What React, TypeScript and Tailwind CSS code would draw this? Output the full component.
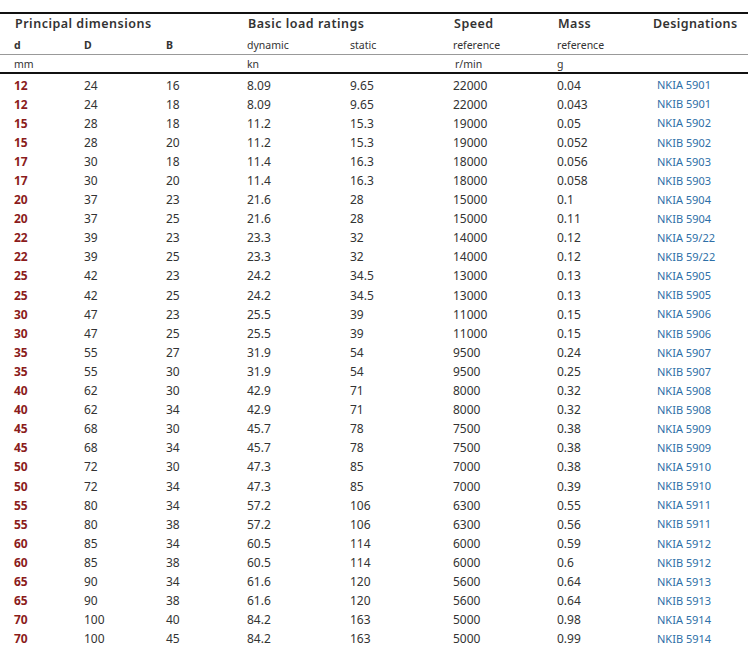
import React from "react";

const rows: string[][] = [
  ["12", "24", "16", "8.09", "9.65", "22000", "0.04", "NKIA 5901"],
  ["12", "24", "18", "8.09", "9.65", "22000", "0.043", "NKIB 5901"],
  ["15", "28", "18", "11.2", "15.3", "19000", "0.05", "NKIA 5902"],
  ["15", "28", "20", "11.2", "15.3", "19000", "0.052", "NKIB 5902"],
  ["17", "30", "18", "11.4", "16.3", "18000", "0.056", "NKIA 5903"],
  ["17", "30", "20", "11.4", "16.3", "18000", "0.058", "NKIB 5903"],
  ["20", "37", "23", "21.6", "28", "15000", "0.1", "NKIA 5904"],
  ["20", "37", "25", "21.6", "28", "15000", "0.11", "NKIB 5904"],
  ["22", "39", "23", "23.3", "32", "14000", "0.12", "NKIA 59/22"],
  ["22", "39", "25", "23.3", "32", "14000", "0.12", "NKIB 59/22"],
  ["25", "42", "23", "24.2", "34.5", "13000", "0.13", "NKIA 5905"],
  ["25", "42", "25", "24.2", "34.5", "13000", "0.13", "NKIB 5905"],
  ["30", "47", "23", "25.5", "39", "11000", "0.15", "NKIA 5906"],
  ["30", "47", "25", "25.5", "39", "11000", "0.15", "NKIB 5906"],
  ["35", "55", "27", "31.9", "54", "9500", "0.24", "NKIA 5907"],
  ["35", "55", "30", "31.9", "54", "9500", "0.25", "NKIB 5907"],
  ["40", "62", "30", "42.9", "71", "8000", "0.32", "NKIA 5908"],
  ["40", "62", "34", "42.9", "71", "8000", "0.32", "NKIB 5908"],
  ["45", "68", "30", "45.7", "78", "7500", "0.38", "NKIA 5909"],
  ["45", "68", "34", "45.7", "78", "7500", "0.38", "NKIB 5909"],
  ["50", "72", "30", "47.3", "85", "7000", "0.38", "NKIA 5910"],
  ["50", "72", "34", "47.3", "85", "7000", "0.39", "NKIB 5910"],
  ["55", "80", "34", "57.2", "106", "6300", "0.55", "NKIA 5911"],
  ["55", "80", "38", "57.2", "106", "6300", "0.56", "NKIB 5911"],
  ["60", "85", "34", "60.5", "114", "6000", "0.59", "NKIA 5912"],
  ["60", "85", "38", "60.5", "114", "6000", "0.6", "NKIB 5912"],
  ["65", "90", "34", "61.6", "120", "5600", "0.64", "NKIA 5913"],
  ["65", "90", "38", "61.6", "120", "5600", "0.64", "NKIB 5913"],
  ["70", "100", "40", "84.2", "163", "5000", "0.98", "NKIA 5914"],
  ["70", "100", "45", "84.2", "163", "5000", "0.99", "NKIB 5914"],
];

const cols = "grid grid-cols-[84px_82px_81px_103px_103px_104px_100px_1fr]";

export default function App() {
  return (
    <div className="w-[749px] h-[649px] bg-white pt-[12px] text-[#333]" style={{ fontFamily: '"Noto Sans", "Open Sans", sans-serif' }}>
      <div className="border-t-2 border-[#111] w-[748px]">
        <div className={`${cols} h-[20px] pt-[1px] items-center text-[12.5px] font-semibold tracking-[0.5px] text-[#333]`}>
          <div className="col-span-3 pl-[15px]">Principal dimensions</div>
          <div className="col-span-2 pl-[1px]">Basic load ratings</div>
          <div className="pl-[1px]">Speed</div>
          <div className="pl-[1px]">Mass</div>
          <div className="-ml-[4px] tracking-[0.4px]">Designations</div>
        </div>
        <div className={`${cols} h-[21px] pt-[3px] items-center text-[10.5px] border-b border-[#999]`}>
          <div className="pl-[14px] font-bold">d</div>
          <div className="font-bold">D</div>
          <div className="font-bold">B</div>
          <div>dynamic</div>
          <div>static</div>
          <div>reference</div>
          <div>reference</div>
          <div></div>
        </div>
        <div className={`${cols} h-[19px] pt-[2px] items-center text-[10.5px] border-b-2 border-[#111]`}>
          <div className="pl-[14px]">mm</div>
          <div></div>
          <div></div>
          <div>kn</div>
          <div></div>
          <div className="pl-[2px]">r/min</div>
          <div>g</div>
          <div></div>
        </div>
        <div className="pt-[2px]">
          {rows.map((r, i) => (
            <div key={i} className={`${cols} h-[19.1px] items-center text-[12px]`}>
              <div className="pl-[14px] font-bold text-[#8b1c1c]">{r[0]}</div>
              <div>{r[1]}</div>
              <div>{r[2]}</div>
              <div>{r[3]}</div>
              <div>{r[4]}</div>
              <div>{r[5]}</div>
              <div>{r[6]}</div>
              <div className="text-[11px] text-[#2e6fa7]">{r[7]}</div>
            </div>
          ))}
        </div>
      </div>
    </div>
  );
}
